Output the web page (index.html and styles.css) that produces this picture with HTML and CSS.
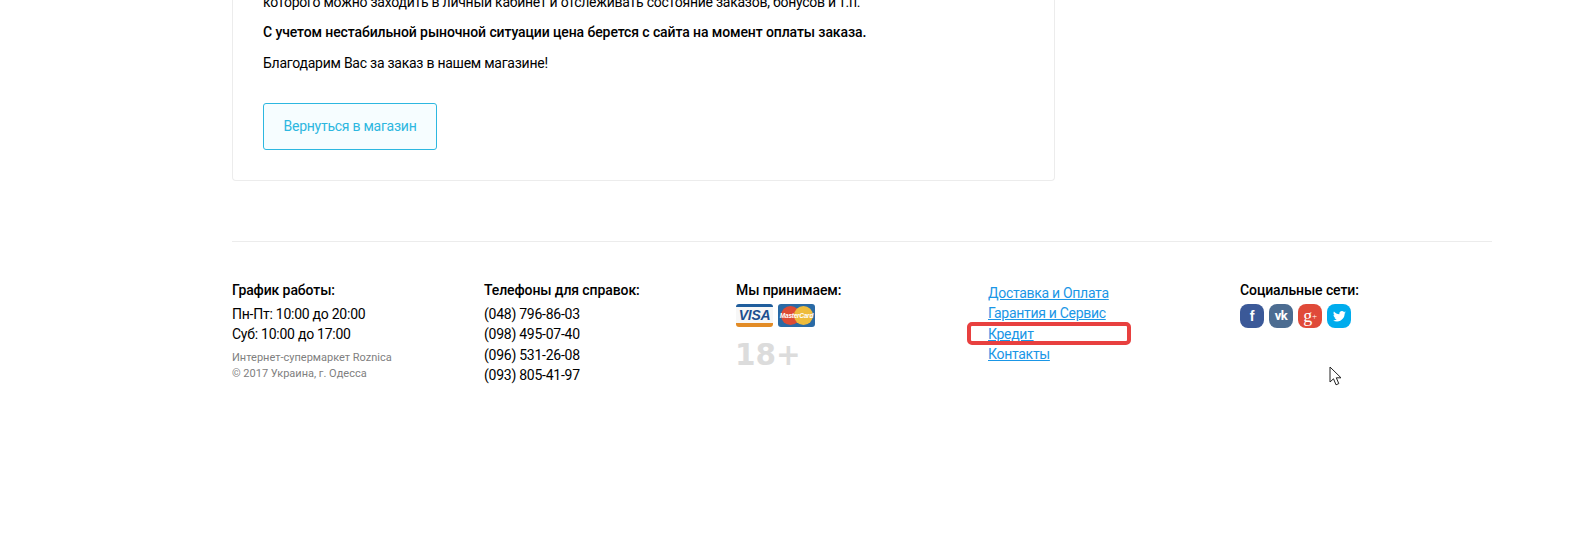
FILE: index.html
```html
<!DOCTYPE html>
<html lang="ru">
<head>
    <meta charset="UTF-8">
    <title>Roznica</title>
    <link rel="stylesheet" href="styles.css">
</head>
<body>
    <div class="page">
        <div class="order-card">
            <p>которого можно заходить в личный кабинет и отслеживать состояние заказов, бонусов и т.п.</p>
            <p class="strong">С учетом нестабильной рыночной ситуации цена берется с сайта на момент оплаты заказа.</p>
            <p>Благодарим Вас за заказ в нашем магазине!</p>
            <a class="back-btn" href="#">Вернуться в магазин</a>
        </div>

        <div class="footer">
            <div class="footer-col">
                <div class="footer-title">График работы:</div>
                <div class="footer-line">Пн-Пт: 10:00 до 20:00</div>
                <div class="footer-line">Суб: 10:00 до 17:00</div>
                <div class="copyright">
                    <div>Интернет-супермаркет Roznica</div>
                    <div>© 2017 Украина, г. Одесса</div>
                </div>
            </div>
            <div class="footer-col">
                <div class="footer-title">Телефоны для справок:</div>
                <div class="footer-line">(048) 796-86-03</div>
                <div class="footer-line">(098) 495-07-40</div>
                <div class="footer-line phone-gap">(096) 531-26-08</div>
                <div class="footer-line">(093) 805-41-97</div>
            </div>
            <div class="footer-col">
                <div class="footer-title">Мы принимаем:</div>
                <div class="pay-row">
                    <div class="pay-visa"><span>VISA</span></div>
                    <div class="pay-mc">
                        <i class="mc-red"></i>
                        <i class="mc-yellow"></i>
                        <span>MasterCard</span>
                    </div>
                </div>
                <div class="age-mark">18+</div>
            </div>
            <div class="footer-col footer-links">
                <a href="#">Доставка и Оплата</a>
                <a href="#">Гарантия и Сервис</a>
                <a href="#">Кредит</a>
                <a href="#">Контакты</a>
                <div class="highlight"></div>
            </div>
            <div class="footer-col">
                <div class="footer-title">Социальные сети:</div>
                <div class="social-row">
                    <a class="soc soc-fb" href="#">f</a>
                    <a class="soc soc-vk" href="#">vk</a>
                    <a class="soc soc-gp" href="#">g<sup>+</sup></a>
                    <a class="soc soc-tw" href="#">
                        <svg width="13" height="11" viewBox="0 0 24 20"><path fill="#fff" d="M24 2.400c-.9.4-1.800.7-2.800.8 1-.6 1.800-1.600 2.200-2.700-1 .6-2 1-3.100 1.200C19.300.7 18 0 16.600 0c-2.700 0-4.900 2.200-4.900 4.900 0 .4 0 .8.100 1.100C7.700 5.800 4.100 3.900 1.700.9c-.4.700-.7 1.600-.7 2.500 0 1.700.9 3.200 2.200 4.100-.8 0-1.600-.2-2.200-.6v.1c0 2.400 1.700 4.400 3.900 4.800-.4.100-.8.200-1.300.2-.3 0-.6 0-.9-.1.600 2 2.400 3.400 4.600 3.400-1.700 1.300-3.800 2.100-6.100 2.100-.4 0-.8 0-1.200-.1C2.200 18.300 4.800 19.100 7.500 19.100c9.100 0 14-7.500 14-14v-.6c1-.7 1.800-1.600 2.500-2.100z"/></svg>
                    </a>
                </div>
            </div>
        </div>
    </div>

    <svg class="cursor" width="14" height="20" viewBox="0 0 14 20"><path fill="#fff" stroke="#222" d="M1 1v15l3.500-3.200 2.500 6 2.800-1.200-2.500-5.800h4.700z"/></svg>
</body>
</html>
```

FILE: styles.css
```css
html, body {
    margin: 0;
    height: 553px;
    overflow: hidden;
    background: #fff;
}

body {
    position: relative;
    font-family: Roboto, "Noto Sans", sans-serif;
    font-size: 14px;
    line-height: 20px;
    letter-spacing: -.25px;
    color: #000;
}

.page {
    width: 1260px;
    margin: -8px 0 0 232px;
}

.order-card {
    width: 761px;
    padding: 0 30px 30px;
    border: 1px solid #ececec;
    border-top: 0;
    border-radius: 0 0 4px 4px;
}

.order-card p {
    margin: 0 0 10.500px;
}

.order-card .strong {
    margin: -1px 0 11.500px;
    font-weight: 500;
    letter-spacing: -.1px;
}

.back-btn {
    display: block;
    width: 172px;
    height: 45px;
    margin-top: 30px;
    border: 1px solid #2db7e0;
    border-radius: 3px;
    background: #f6fdff;
    color: #2db7e0;
    line-height: 45px;
    text-align: center;
    text-decoration: none;
}

.footer {
    display: flex;
    margin-top: 60px;
    padding-top: 38px;
    border-top: 1px solid #ececec;
}

.footer-col {
    position: relative;
    width: 252px;
}

.footer-title {
    font-weight: 500;
    margin-bottom: 4px;
    letter-spacing: -.1px;
}

.footer-line {
    height: 20px;
}

.phone-gap {
    margin-top: 1px;
}

.copyright {
    margin-top: 6px;
    color: #808080;
    font-size: 11px;
    line-height: 16px;
    letter-spacing: 0;
}

.pay-row {
    display: flex;
    gap: 5px;
    height: 23px;
}

.pay-visa {
    box-sizing: border-box;
    width: 37px;
    height: 23px;
    border-top: 3px solid #1f5d9c;
    border-bottom: 4px solid #e28b25;
    border-radius: 3px;
    background: #f7f7f7;
    text-align: center;
}

.pay-visa span {
    display: block;
    color: #1d4f8f;
    font-family: "Liberation Sans", sans-serif;
    font-size: 14px;
    font-weight: 700;
    font-style: italic;
    line-height: 16px;
}

.pay-mc {
    position: relative;
    width: 37px;
    height: 23px;
    border-radius: 3px;
    background: #2a6aa5;
    overflow: hidden;
}

.pay-mc i {
    position: absolute;
    top: 2px;
    width: 19px;
    height: 19px;
    border-radius: 50%;
}

.mc-red {
    left: 3px;
    background: #dc4b35;
}

.mc-yellow {
    left: 16px;
    background: #eebc3c;
}

.pay-mc span {
    position: absolute;
    top: 0;
    left: 0;
    width: 37px;
    color: #fff;
    font-family: "Liberation Sans", sans-serif;
    font-size: 6.500px;
    font-weight: 700;
    font-style: italic;
    line-height: 23px;
    text-align: center;
}

.age-mark {
    margin-top: 8px;
    margin-left: -1px;
    color: #dcdcdc;
    font-family: "DejaVu Sans", sans-serif;
    font-size: 29.500px;
    font-weight: 700;
    line-height: 40px;
    letter-spacing: 0;
}

.footer-links {
    display: flex;
    flex-direction: column;
    align-items: flex-start;
    padding-top: 3px;
}

.footer-links a {
    height: 20.300px;
    color: #1a96e6;
    letter-spacing: -.3px;
}

.highlight {
    position: absolute;
    top: 42px;
    left: -21px;
    width: 156px;
    height: 15px;
    border: 4px solid #e8403f;
    border-radius: 5px;
}

.social-row {
    display: flex;
    gap: 5px;
}

.soc {
    display: flex;
    align-items: center;
    justify-content: center;
    width: 24px;
    height: 24px;
    border-radius: 8px;
    color: #fff;
    text-decoration: none;
    font-weight: 700;
}

.soc-fb {
    background: #3b5998;
    font-family: "Liberation Sans", sans-serif;
    font-size: 14px;
}

.soc-vk {
    background: #4c6c91;
    font-size: 13px;
    letter-spacing: -.5px;
}

.soc-gp {
    background: #e04a39;
    font-family: "Liberation Serif", serif;
    font-size: 18px;
    font-weight: 400;
}

.soc-gp sup {
    font-size: 9px;
    line-height: 0;
}

.soc-tw {
    background: #00aced;
}

.cursor {
    position: absolute;
    top: 366px;
    left: 1329px;
}
```
